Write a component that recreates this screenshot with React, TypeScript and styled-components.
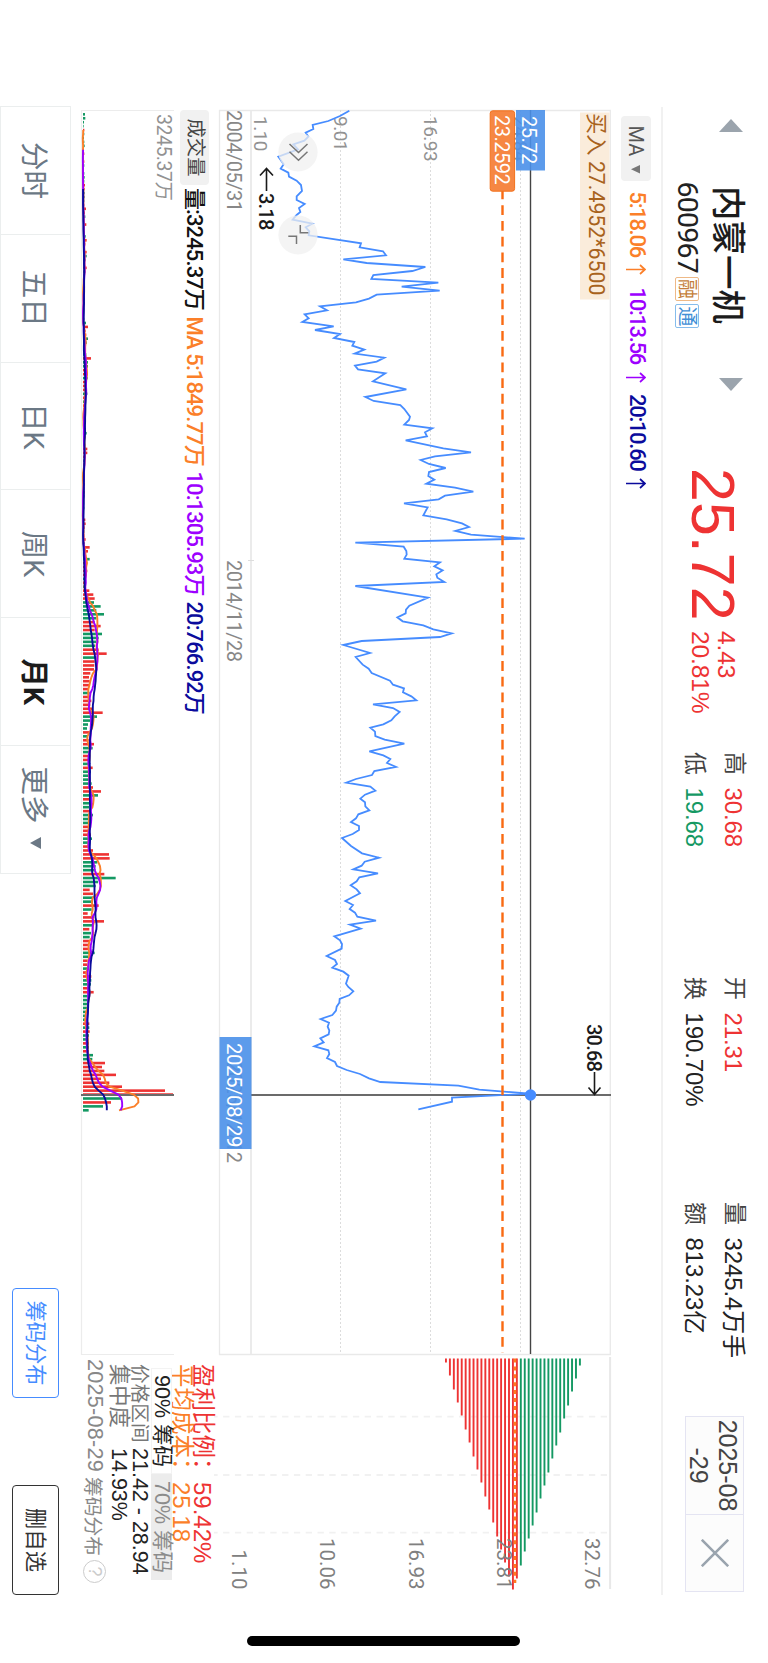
import styled, { createGlobalStyle } from "styled-components";

const RED = "#ee3333";
const GREEN = "#149963";
const ORANGE = "#fb7f29";
const PURPLE = "#9d00ff";
const NAVY = "#0b0b9c";
const BLUE = "#468cff";

// price line: [time, height], three units per pixel
const PRICE: [number, number][] = [
    [2, 295], [18, 267], [33, 232], [45, 185], [57, 187], [68, 164], [80, 172], [92, 160], [103, 127], [118, 141],
    [140, 82], [163, 98], [176, 89], [188, 112], [200, 114], [212, 137], [225, 150], [243, 153], [259, 137], [270, 137],
    [282, 161], [294, 144], [306, 148], [315, 137], [329, 125], [341, 184], [352, 164], [364, 175], [376, 173], [400, 330],
    [412, 326], [424, 396], [436, 405], [448, 277], [459, 347], [471, 523], [483, 484], [495, 367], [507, 361], [518, 562],
    [530, 452], [542, 566], [554, 377], [566, 354], [577, 315], [589, 207], [601, 228], [613, 161], [625, 173], [636, 154],
    [649, 248], [660, 192], [672, 267], [684, 249], [696, 310], [707, 304], [719, 340], [731, 311], [743, 400], [755, 377],
    [767, 312], [778, 321], [790, 403], [814, 366], [838, 466], [861, 343], [873, 368], [885, 448], [897, 460], [920, 477],
    [930, 474], [944, 460], [955, 544], [967, 522], [979, 528], [991, 464], [1015, 577], [1027, 660], [1039, 552], [1050, 509],
    [1062, 534], [1074, 584], [1086, 534], [1098, 532], [1109, 550], [1121, 526], [1133, 612], [1145, 667], [1157, 582], [1168, 563],
    [1180, 459], [1192, 530], [1216, 517], [1228, 587], [1240, 633], [1251, 654], [1263, 613], [1274, 660], [1286, 821], [1298, 313],
    [1310, 458], [1323, 466], [1334, 467], [1346, 460], [1357, 567], [1369, 550], [1381, 575], [1393, 556], [1403, 559], [1416, 580],
    [1428, 313], [1463, 531], [1487, 475], [1499, 465], [1510, 464], [1522, 439], [1534, 455], [1546, 517], [1558, 547], [1570, 602],
    [1581, 567], [1593, 332], [1605, 277], [1629, 357], [1641, 314], [1664, 335], [1676, 353], [1689, 362], [1712, 417], [1724, 426],
    [1735, 459], [1747, 456], [1759, 481], [1771, 496], [1783, 366], [1794, 426], [1806, 446], [1819, 431], [1831, 421], [1843, 397],
    [1853, 358], [1865, 372], [1878, 373], [1889, 401], [1901, 460], [1924, 355], [1936, 397], [1947, 418], [1959, 408], [1971, 435],
    [1983, 370], [1995, 363], [2007, 315], [2018, 286], [2030, 358], [2042, 373], [2054, 342], [2066, 328], [2077, 342], [2089, 343],
    [2101, 355], [2113, 322], [2125, 315], [2136, 300], [2148, 324], [2160, 324], [2172, 305], [2184, 273], [2208, 300], [2230, 333],
    [2243, 384], [2255, 341], [2267, 332], [2278, 307], [2290, 381], [2302, 325], [2314, 317], [2326, 299], [2338, 317], [2350, 327],
    [2373, 283], [2385, 306], [2397, 296], [2408, 312], [2420, 319], [2432, 375], [2444, 297], [2456, 329], [2479, 250], [2491, 267],
    [2502, 273], [2516, 272], [2538, 227], [2550, 252], [2562, 258], [2573, 244], [2585, 277], [2597, 293], [2621, 285], [2631, 292],
    [2644, 307], [2656, 294], [2667, 266], [2678, 265], [2690, 257], [2702, 255], [2715, 244], [2727, 209], [2738, 234], [2750, 230],
    [2762, 235], [2773, 233], [2785, 208], [2797, 218], [2809, 190], [2821, 232], [2832, 235], [2844, 228], [2856, 252], [2868, 258],
    [2880, 287], [2892, 327], [2905, 354], [2916, 388], [2927, 622], [2939, 685], [2951, 838], [2963, 603], [2975, 603], [2998, 502],
];

// monthly volume, negative = falling month
const VOLUME = [
    -6, -7, -3, -2, 4, -4, -3, -4, -5, 3, 4, -3, 4, -4, 3, -4, -5, -4, 6, 5,
    -5, -5, -4, 4, 9, 6, -7, 4, 10, 6, -6, -8, 11, 7, -5, 11, -11, -8, 6, 11,
    -7, 3, -3, -4, -6, 5, -4, -5, -6, 3, -3, 3, -4, -9, 15, 8, 10, -15, -11, 8,
    7, -10, 24, -15, -15, 12, 14, -14, 9, 7, 12, -13, 5, -6, 5, -4, 5, 4, -9, 5,
    9, -11, 8, 6, 7, 13, 13, 8, -3, 3, -3, 4, -4, -5, -6, 4, 5, -4, -3, -3,
    -4, -3, -3, 7, 8, 5, -4, 4, 8, -6, 20, 15, 8, -20, 13, 10, 13, 7, -6, 8,
    -7, 19, 31, 35, -33, -53, -40, -63, -40, 35, 53, 35, -57, -47, -40, -36, 47, 71, -40, 35,
    34, 33, 22, 18, 20, 20, 18, -20, 21, 25, 22, 27, 59, -42, -22, -15, -12, 22, -15, 17,
    33, -29, -20, 17, 15, -20, 29, -24, -20, -20, -26, 30, 54, -45, 20, -20, -18, 18, -30, -20,
    -18, 17, 15, 24, -27, -15, 15, 30, 78, 80, -43, -38, -37, 64, -98, -45, -38, 20, 30, -30,
    -30, 47, -26, 14, 33, 63, -32, 19, -24, -20, 19, 19, 19, -35, -15, 14, 12, -12, 12, 25,
    -25, -24, 15, 32, -16, -15, -13, -12, -9, -8, -8, 19, -19, 20, -18, -15, 18, -18, 18, -30,
    -28, 66, 57, 64, 99, 54, 79, 117, 246, 270, -117, 84, -60, -17,
];

const CHIPS = [
    4, 17, 31, 44, 57, 71, 84, 98, 111, 124, 138, 151, 164, 178, 191, 204, 218, 231, 220,
    207, 193, 180, 167, 154, 140, 127, 114, 100, 87, 74, 60, 47, 33, 20, 7,
];
const PROFIT_CHIPS = 19;

const STEP = 11.81 / 3;
const barX = (i: number) => 13 / 3 + i * STEP;

const average = (days: number) =>
    VOLUME.map((_, i) => {
        if (i < days - 1) return null;
        const sum = VOLUME.slice(i - days + 1, i + 1).reduce((a, b) => a + Math.abs(b), 0);
        return `${barX(i).toFixed(1)},${(92.3 - (sum / days / 3) * 1.02).toFixed(1)}`;
    }).filter(Boolean).join(" ");

const QUOTES = [
    { label: "高", value: "30.68", color: RED },
    { label: "开", value: "21.31", color: RED },
    { label: "量", value: "3245.4万手", color: "#222" },
    { label: "低", value: "19.68", color: GREEN },
    { label: "换", value: "190.70%", color: "#222" },
    { label: "额", value: "813.23亿", color: "#222" },
];

const TABS = ["分时", "五日", "日K", "周K", "月K"];

const PriceChart = () => (
    <ChartSvg width={1245} height={392} viewBox="0 0 1245 392">
        <g stroke="#e9e9e9" strokeWidth={1.3} fill="none">
            <path d="M0.5 391.5V0.7H1244.5V391.5Z" />
            <path d="M0 360H1244.5" strokeWidth={1.8} />
        </g>
        <g stroke="#dcdcdc" strokeWidth={1} strokeDasharray="2 2">
            <path d="M0 90.5H1244M0 180.5H1244M0 270.5H1244" />
        </g>
        <Axis x={6} y={97.5}>24.84</Axis>
        <Axis x={6} y={187.3}>16.93</Axis>
        <Axis x={6} y={277.3}>9.01</Axis>
        <Axis x={6} y={357}>1.10</Axis>
        <DateText x={0} y={384}>2004/05/31</DateText>
        <DateText x={450} y={384}>2014/11/28</DateText>
        <DateText x={951} y={384}>2025/12/12</DateText>
        <path d="M450.5 357V363" stroke="#ddd" />
        <path d="M0 80.5H1244" stroke="#444" strokeWidth={1.4} />
        <path d="M985 0V360" stroke="#6b6b6b" strokeWidth={1.8} />
        <polyline
            points={PRICE.map(([t, h]) => `${t / 3},${360 - h / 3}`).join(" ")}
            fill="none" stroke={BLUE} strokeWidth={1.8}
        />
        <path d="M79.5 108.5H1243" stroke="#f96a12" strokeWidth={2.4} strokeDasharray="9.8 5.92" />
        <circle cx={985} cy={80.5} r={5.7} fill={BLUE} />

        <rect x={2.5} y={1.5} width={187} height={29.5} fill="#faecdb" />
        <BuyText x={3} y={22}>买入 27.4952*6500</BuyText>
        <rect x={0} y={66} width={60.5} height={29} fill="#4a90e9" fillOpacity={0.9} />
        <TagText x={6} y={88.6}>25.72</TagText>
        <rect x={0.8} y={96.4} width={80.4} height={24.4} rx={2.5} fill="#f68743" stroke="#f2711c" />
        <TagText x={5} y={115.6}>23.2592</TagText>
        <rect x={927} y={359.5} width={112} height={32} fill="#4a90e9" fillOpacity={0.9} />
        <TagText x={933} y={384} $size={20.5}>2025/08/29</TagText>

        <g fill="none" stroke="#1a1a1a" strokeWidth={1.6}>
            <path d="M81 344.5H58.5M65.5 338L58.5 344.5L65.5 351" />
            <path d="M962 16.5H984M977.5 10.5L984.5 16.5L977.5 22.5" />
        </g>
        <PeakText x={83} y={352}>3.18</PeakText>
        <PeakText x={914} y={23.6}>30.68</PeakText>

        <g fill="#f0f0f0" fillOpacity={0.75}>
            <circle cx={42} cy={313} r={19.6} />
            <circle cx={125} cy={313} r={19.6} />
        </g>
        <g fill="none" stroke="#777" strokeWidth={1.5}>
            <path d="M34 321.5L42.5 312.5L34 303.5M41.8 321.5L50.3 312.5L41.8 303.5" />
            <path d="M115 310.7H122.7V302.7M134 314.5H126.3V322.7" />
        </g>
    </ChartSvg>
);

const VolumeChart = () => (
    <ChartSvg width={1245} height={93} viewBox="0 0 1245 93">
        <path d="M0.5 0V92.5H1244.5V0" fill="none" stroke="#ececec" strokeWidth={1.2} />
        <path d="M0 0.5H1" stroke="#ececec" />
        <Axis x={4} y={17.5} $size={19.5}>3245.37万</Axis>
        {VOLUME.map((v, i) => (
            <rect
                key={i}
                x={barX(i) - 1.3}
                y={91 - Math.abs(v) / 3}
                width={2.6}
                height={Math.abs(v) / 3}
                fill={v > 0 ? RED : GREEN}
            />
        ))}
        <path d="M985 0V93" stroke="#6b6b6b" strokeWidth={1.8} />
        <g fill="none" strokeWidth={1.9} strokeLinejoin="round">
            <polyline points={average(5)} stroke={ORANGE} />
            <polyline points={average(10)} stroke={PURPLE} />
            <polyline points={average(20)} stroke={NAVY} />
        </g>
    </ChartSvg>
);

const ChipChart = () => (
    <ChartSvg width={238} height={397} viewBox="0 0 238 397">
        <path d="M0 0.9H232" stroke="#e8e8e8" strokeWidth={2} />
        <path
            d="M59.7 4V397M118 4V397M175.7 4V397"
            stroke="#f1f1f1" strokeWidth={1.8} strokeDasharray="6.3 5.5"
        />
        {CHIPS.map((len, i) => (
            <rect key={i} x={1.5} y={164.1 - i * 3.94} width={len} height={1.9} fill={i < PROFIT_CHIPS ? RED : GREEN} />
        ))}
        <path d="M1.5 96H226" stroke="#ff7a1f" strokeWidth={2.6} strokeDasharray="4 3.9" />
        <Scale x={232.5} y={26}>32.76</Scale>
        <Scale x={232.5} y={114.3}>23.81</Scale>
        <Scale x={232.5} y={202.5}>16.93</Scale>
        <Scale x={232.5} y={291}>10.06</Scale>
        <Scale x={232.5} y={379.4}>1.10</Scale>
    </ChartSvg>
);

const Header = () => (
    <HeaderBar>
        <StockNav>
            <NavArrow width={13} height={24}><path d="M0 12L13 0V24Z" /></NavArrow>
            <Stock>
                <Name>内蒙一机</Name>
                <CodeLine>
                    <Code>600967</Code>
                    <Badge $color="#c57f3c" $line="#eeb987">融</Badge>
                    <Badge $color="#3f8fd6" $line="#86bdec">通</Badge>
                </CodeLine>
            </Stock>
            <NavArrow width={13} height={24}><path d="M13 12L0 0V24Z" /></NavArrow>
        </StockNav>
        <Price>25.72</Price>
        <Change>
            <span>4.43</span>
            <span>20.81%</span>
        </Change>
        <Quotes>
            {QUOTES.map((q) => (
                <Quote key={q.label}>
                    <QuoteLabel>{q.label}</QuoteLabel>
                    <QuoteValue $color={q.color}>{q.value}</QuoteValue>
                </Quote>
            ))}
        </Quotes>
        <DateBox>
            <DateValue>2025-08<br />-29</DateValue>
            <CloseBtn>
                <svg width={28} height={28} viewBox="0 0 28 28" stroke="#9aa4ae" strokeWidth={2.6}>
                    <path d="M0.8 0.8L27.2 27.2M27.2 0.8L0.8 27.2" />
                </svg>
            </CloseBtn>
        </DateBox>
    </HeaderBar>
);

const ChipInfo = () => (
    <Info>
        <InfoBig $color={RED}><b>盈利比例：</b><i>59.42%</i></InfoBig>
        <InfoBig $color={ORANGE}><b>平均成本：</b><i>25.18</i></InfoBig>
        <Ranges>
            <Range $active>90% 筹码</Range>
            <Range>70% 筹码</Range>
        </Ranges>
        <InfoRow $size={19.7}><span>价格区间</span><strong>21.42 - 28.94</strong></InfoRow>
        <InfoRow $size={21.3}><span>集中度</span><strong>14.93%</strong></InfoRow>
        <InfoDate>2025-08-29 <em>筹码分布</em><Help>?</Help></InfoDate>
    </Info>
);

const App = () => {
    return (
        <>
            <GlobalStyle />
            <Phone>
                <Landscape>
                    <Main>
                        <Header />
                        <Body>
                            <Charts>
                                <Legend>
                                    <Picker>MA<Caret width={8.5} height={9}><path d="M0 0H8.5L4.25 9Z" /></Caret></Picker>
                                    <MaItem $color={ORANGE} $width={96}>5:18.06<Up /></MaItem>
                                    <MaItem $color={PURPLE} $width={106.5}>10:13.56<Up /></MaItem>
                                    <MaItem $color={NAVY} $width={106.5}>20:10.60<Up /></MaItem>
                                </Legend>
                                <PriceChart />
                                <VolumeLegend>
                                    <VolumePicker>成交量</VolumePicker>
                                    <VolItem $color="#111" $width={128.5}>量:3245.37万</VolItem>
                                    <VolItem $color={ORANGE} $width={155}>MA 5:1849.77万</VolItem>
                                    <VolItem $color={PURPLE} $width={130}>10:1305.93万</VolItem>
                                    <VolItem $color={NAVY} $width={120}>20:766.92万</VolItem>
                                </VolumeLegend>
                                <VolumeChart />
                            </Charts>
                            <Side>
                                <ChipChart />
                                <ChipInfo />
                            </Side>
                        </Body>
                        <Footer>
                            <Tabs>
                                {TABS.map((tab) => (
                                    <Tab key={tab} $active={tab === "月K"}>{tab}</Tab>
                                ))}
                                <Tab>更多<TabCaret width={12} height={11}><path d="M0 0H12L6 11Z" /></TabCaret></Tab>
                            </Tabs>
                            <Actions>
                                <Action $color={BLUE}>筹码分布</Action>
                                <Action $color="#333">删自选</Action>
                            </Actions>
                        </Footer>
                    </Main>
                    <HomeBar />
                </Landscape>
            </Phone>
        </>
    );
};

export default App;

const Up = () => (
    <UpIcon width={11} height={20} viewBox="0 0 11 20">
        <path d="M5.5 20V1M1 6L5.5 1L10 6" />
    </UpIcon>
);

const GlobalStyle = createGlobalStyle`
    * {
        box-sizing: border-box;
    }
    body {
        margin: 0;
        background: #fff;
        font-family: Roboto, "Noto Sans CJK SC", sans-serif;
    }
    button {
        font-family: inherit;
        padding: 0;
    }
`;

const Phone = styled.div`
    width: 768px;
    height: 1663px;
    overflow: hidden;
    background: #fff;
`;

/* the app runs in landscape on a portrait canvas */
const Landscape = styled.div`
    display: flex;
    align-items: center;
    width: 1663px;
    height: 768px;
    transform-origin: 0 0;
    transform: translateX(768px) rotate(90deg);
    white-space: nowrap;
`;

const Main = styled.div`
    display: flex;
    flex-direction: column;
    width: 1595px;
    height: 768px;
    padding-left: 107px;
`;

const HomeBar = styled.div`
    width: 10px;
    height: 273px;
    margin-left: 41px;
    border-radius: 5px;
    background: #000;
`;

const HeaderBar = styled.header`
    display: flex;
    align-items: flex-start;
    height: 107px;
    border-bottom: 2px solid #f1f1f1;
    font-family: "Liberation Sans", "Noto Sans CJK SC", sans-serif;
`;

const StockNav = styled.div`
    display: flex;
    justify-content: space-between;
    width: 272px;
    margin-left: 12px;
`;

const NavArrow = styled.svg`
    margin-top: 25px;
    fill: #9ba4ad;
`;

const Stock = styled.div`
    display: flex;
    flex-direction: column;
    align-items: center;
    padding-top: 20px;
    font-family: Roboto, "Noto Sans CJK SC", sans-serif;
`;

const Name = styled.div`
    font-size: 34.5px;
    font-weight: 500;
    line-height: 40px;
    color: #1c1c1c;
`;

const CodeLine = styled.div`
    display: flex;
    align-items: center;
    height: 41px;
`;

const Code = styled.span`
    margin-right: 4px;
    font-size: 28.5px;
    letter-spacing: -0.8px;
    color: #222;
`;

const Badge = styled.span<{ $color: string; $line: string }>`
    display: flex;
    align-items: center;
    justify-content: center;
    width: 24px;
    height: 24px;
    margin-right: 3.5px;
    border: 1.5px solid ${(p) => p.$line};
    border-radius: 2px;
    font-size: 20px;
    line-height: 20px;
    color: ${(p) => p.$color};

    &:last-child {
        margin-right: 0;
    }
`;

const Price = styled.div`
    width: 163px;
    margin: 19px 0 0 77px;
    font-size: 61px;
    line-height: 72px;
    color: ${RED};
`;

const Change = styled.div`
    display: flex;
    flex-direction: column;
    width: 121px;
    margin-top: 29px;
    font-size: 24.5px;
    line-height: 26px;
    letter-spacing: -0.1px;
    color: ${RED};
`;

const Quotes = styled.div`
    display: grid;
    grid-template-columns: 225px 225px 214px;
    grid-auto-rows: 39.5px;
    margin-top: 14px;
`;

const Quote = styled.div`
    display: flex;
    align-items: center;
    font-size: 24px;
    line-height: 39px;
`;

const QuoteLabel = styled.span`
    width: 35.5px;
    font-size: 23px;
    color: #444;
`;

const QuoteValue = styled.span<{ $color: string }>`
    padding-top: 1px;
    letter-spacing: -0.1px;
    color: ${(p) => p.$color};
`;

const DateBox = styled.div`
    display: flex;
    width: 176px;
    height: 59px;
    margin-top: 24px;
    border: 1px solid #e4e4f2;
    background: #fcfcfc;
`;

const DateValue = styled.div`
    width: 97px;
    padding-top: 1px;
    font-size: 25px;
    line-height: 29px;
    text-align: center;
    color: #444;
`;

const CloseBtn = styled.button`
    display: flex;
    flex: 1;
    align-items: center;
    justify-content: center;
    padding-bottom: 1px;
    border: 0;
    border-left: 1px solid #e4e4f2;
    background: transparent;
`;

const Body = styled.div`
    display: flex;
    height: 590px;
`;

const Charts = styled.div`
    display: flex;
    flex-direction: column;
    width: 1250px;
    padding-left: 3px;
`;

const ChartSvg = styled.svg`
    display: block;
    flex-shrink: 0;
    overflow: visible;
`;

const Axis = styled.text<{ $size?: number }>`
    font-size: ${(p) => p.$size ?? 19}px;
    letter-spacing: -0.5px;
    fill: #929292;
`;

const DateText = styled.text`
    font-size: 20px;
    letter-spacing: -0.5px;
    fill: #888;
`;

const Scale = styled.text`
    font-size: 20.5px;
    text-anchor: end;
    fill: #808080;
`;

const TagText = styled.text<{ $size?: number }>`
    font-size: ${(p) => p.$size ?? 20}px;
    letter-spacing: -0.5px;
    fill: #fff;
`;

const BuyText = styled.text`
    font-size: 21.3px;
    fill: #a8621c;
`;

const PeakText = styled.text`
    font-size: 20px;
    font-weight: 500;
    letter-spacing: -0.8px;
    fill: #1a1a1a;
`;

const Legend = styled.div`
    display: flex;
    align-items: center;
    height: 50px;
    padding-left: 5.5px;
`;

const Picker = styled.div`
    display: flex;
    align-items: center;
    width: 65px;
    height: 30px;
    margin-right: 11px;
    padding-left: 10px;
    border-radius: 4px;
    background: #f1f1f1;
    font-size: 20px;
    color: #555;
`;

const Caret = styled.svg`
    margin-left: 9px;
    fill: #777;
`;

const MaItem = styled.div<{ $color: string; $width: number }>`
    display: flex;
    align-items: center;
    width: ${(p) => p.$width}px;
    padding-bottom: 2.5px;
    font-size: 22px;
    font-weight: 500;
    letter-spacing: -1.3px;
    color: ${(p) => p.$color};
`;

const UpIcon = styled.svg`
    margin: 2px 0 0 7.5px;
    fill: none;
    stroke: currentColor;
    stroke-width: 1.7;
`;

const VolumeLegend = styled.div`
    display: flex;
    align-items: center;
    height: 45px;
    padding-top: 4px;
`;

const VolumePicker = styled.div`
    width: 75px;
    height: 29px;
    margin-right: 3px;
    border-radius: 4px;
    background: #f1f1f1;
    font-size: 19.3px;
    line-height: 28px;
    text-align: center;
    color: #444;
`;

const VolItem = styled.div<{ $color: string; $width: number }>`
    width: ${(p) => p.$width}px;
    padding-bottom: 5px;
    font-size: 22px;
    font-weight: 500;
    letter-spacing: -0.9px;
    color: ${(p) => p.$color};
`;

const Side = styled.aside`
    display: flex;
    flex-direction: column;
    width: 238px;
    padding-top: 50px;
`;

const Info = styled.div`
    display: flex;
    flex-direction: column;
    padding: 1px 0 0 7px;
    font-family: "Liberation Sans", "Noto Sans CJK SC", sans-serif;
`;

const InfoBig = styled.div<{ $color: string }>`
    display: flex;
    height: 20.5px;
    font-size: 24px;
    line-height: 21px;
    color: ${(p) => p.$color};

    b {
        width: 118px;
        font-size: 23.5px;
        font-weight: 400;
    }
    i {
        font-style: normal;
    }
`;

const Ranges = styled.div`
    display: flex;
    padding-left: 4px;
`;

const Range = styled.div<{ $active?: boolean }>`
    width: 106px;
    height: 20.5px;
    padding-left: 6px;
    border: 1px solid ${(p) => (p.$active ? "#f3f3f3" : "#ececec")};
    background: ${(p) => (p.$active ? "#fff" : "#ececec")};
    font-size: 21.5px;
    line-height: 19px;
    color: ${(p) => (p.$active ? "#222" : "#8c8c8c")};
`;

const InfoRow = styled.div<{ $size: number }>`
    display: flex;
    height: 21px;
    font-size: ${(p) => p.$size}px;
    line-height: 22px;
    color: #777;

    span {
        width: 84px;
    }
    strong {
        font-size: 21.5px;
        font-weight: 400;
        color: #222;
    }
`;

const InfoDate = styled.div`
    display: flex;
    align-items: center;
    height: 29px;
    margin-left: -5px;
    font-size: 21.5px;
    letter-spacing: 0.3px;
    color: #888;

    em {
        margin: 0 4px 0 5px;
        font-size: 19.8px;
        font-style: normal;
        letter-spacing: 0;
    }
`;

const Help = styled.span`
    display: flex;
    align-items: center;
    justify-content: center;
    width: 23px;
    height: 23px;
    border: 1.5px solid #ccc;
    border-radius: 50%;
    font-size: 18px;
    color: #ccc;
`;

const Footer = styled.footer`
    display: flex;
    justify-content: space-between;
    height: 70.5px;
`;

const Tabs = styled.nav`
    display: flex;
    width: 768px;
    margin-left: -1px;
    border: 1px solid #ebeeee;
    border-right: 0;
`;

const Tab = styled.button<{ $active?: boolean }>`
    display: flex;
    flex: 1;
    align-items: center;
    justify-content: center;
    padding-bottom: 2px;
    border: 0;
    border-right: 1px solid #ebeeee;
    background: transparent;
    font-size: 28.5px;
    font-weight: ${(p) => (p.$active ? 700 : 400)};
    color: ${(p) => (p.$active ? "#1c1c1c" : "#6b7885")};
`;

const TabCaret = styled.svg`
    margin: 2px 4px 0 13px;
    fill: #6b7885;
`;

const Actions = styled.div`
    display: flex;
    gap: 87px;
    padding-top: 11.5px;
`;

const Action = styled.button<{ $color: string }>`
    width: 110px;
    height: 47px;
    padding-bottom: 3px;
    border: 1.5px solid ${(p) => p.$color};
    border-radius: 4px;
    background: transparent;
    font-size: 21.3px;
    color: ${(p) => p.$color};
`;
